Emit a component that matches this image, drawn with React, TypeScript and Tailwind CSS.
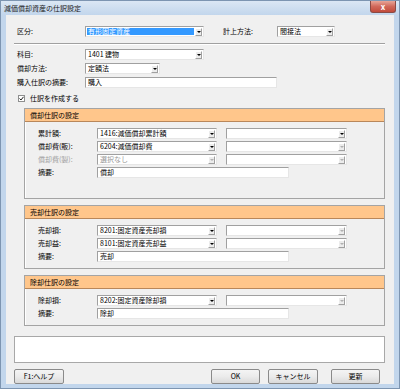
import React from "react";

const FONT = "font-['Noto_Sans_CJK_JP','Noto_Sans_CJK_SC',sans-serif]";

function Arrow({ disabled }: { disabled?: boolean }) {
  return (
    <div className="ml-auto mr-[1px] flex h-[8px] w-[7px] shrink-0 items-center justify-center border border-t-white border-l-white border-r-[#a0a0a0] border-b-[#a0a0a0] bg-[#ececec]">
      <div
        className={
          "h-0 w-0 border-x-[2px] border-t-[2px] border-x-transparent " +
          (disabled ? "border-t-[#b0b0b0]" : "border-t-black")
        }
      />
    </div>
  );
}

function Select({
  w,
  value,
  disabled,
  arrowDisabled,
  highlight,
}: {
  w: string;
  value?: string;
  disabled?: boolean;
  arrowDisabled?: boolean;
  highlight?: boolean;
}) {
  return (
    <div
      className={
        w +
        " flex h-[11px] shrink-0 items-center border border-t-[#a0a0a0] border-l-[#a0a0a0] border-r-[#e6e6e6] border-b-[#e6e6e6] bg-white"
      }
    >
      <div
        className={
          "ml-[1px] flex h-[7px] items-center pl-[1px] leading-none " +
          (highlight ? "flex-1 bg-[#3399ff] text-white mr-[1px]" : "") +
          (disabled ? " text-[#9a9a9a]" : " text-black")
        }
      >
        {value}
      </div>
      <Arrow disabled={arrowDisabled ?? disabled} />
    </div>
  );
}

function Input({ w, value }: { w: string; value: string }) {
  return (
    <div
      className={
        w +
        " flex h-[11px] shrink-0 items-center border border-t-[#a0a0a0] border-l-[#a0a0a0] border-r-[#e6e6e6] border-b-[#e6e6e6] bg-white pl-[2px] leading-none"
      }
    >
      {value}
    </div>
  );
}

function Label({ w, text, disabled }: { w: string; text: string; disabled?: boolean }) {
  return (
    <div className={w + " shrink-0 leading-none " + (disabled ? "text-[#a0a0a0]" : "text-black")}>
      {text}
    </div>
  );
}

type Row = { label: string; first?: string; second?: boolean; firstDisabled?: boolean; secondDisabled?: boolean; input?: string };

function Section({ title, rows, h }: { title: string; rows: Row[]; h: string }) {
  return (
    <div className={h + " ml-[10px] mr-[1px] border border-[#a4a4a4] shadow-[inset_1px_1px_0_#fff]"}>
      <div className="flex h-[13px] items-center border-b border-[#b9875a] bg-[#ffc68b] pl-[5px] leading-none">
        {title}
      </div>
      <div className="flex flex-col gap-[2px] pl-[13px] pt-[6px]">
        {rows.map((r) => (
          <div key={r.label} className="flex h-[11px] items-center">
            <Label w="w-[59px]" text={r.label} disabled={r.firstDisabled} />
            {r.input !== undefined ? (
              <Input w="w-[192px]" value={r.input} />
            ) : (
              <>
                <Select w="w-[120px]" value={r.first} disabled={r.firstDisabled} />
                <div className="ml-[9px]">
                  <Select w="w-[121px]" arrowDisabled={r.secondDisabled} />
                </div>
              </>
            )}
          </div>
        ))}
      </div>
    </div>
  );
}

function Button({ w, text, className = "" }: { w: string; text: string; className?: string }) {
  return (
    <div
      className={
        w +
        " " +
        className +
        " flex h-[15px] items-center justify-center rounded-[2px] border border-[#8a8a8a] bg-gradient-to-b from-[#f4f4f4] via-[#ebebeb] to-[#d9d9d9] leading-none text-black"
      }
    >
      {text}
    </div>
  );
}

export default function App() {
  return (
    <div className={FONT + " flex h-[389px] w-[400px] flex-col border border-[#7d95b1] bg-[#c2d6ec] text-[7px]"}>
      <div className="flex h-[14px] shrink-0 items-start justify-between bg-gradient-to-b from-[#dbe7f4] to-[#c2d6ec]">
        <div className="pl-[3px] pt-[4px] leading-none text-[#1a1a1a]">減価償却資産の仕訳設定</div>
        <div className="mr-[3px] flex h-[12px] w-[26px] items-center justify-center rounded-b-[3px] border border-t-0 border-[#8a4a44] bg-gradient-to-b from-[#e7a598] via-[#d0685a] to-[#c24a3a] text-[8px] font-bold leading-none text-white">
          x
        </div>
      </div>

      <div className="mx-[5px] mb-[4px] flex flex-1 flex-col bg-[#f0f0f0] px-[8px] pt-[11px] text-black">
        <div className="flex h-[11px] items-center pl-[3px]">
          <Label w="w-[68px]" text="区分:" />
          <Select w="w-[119px]" value="有形固定資産" highlight />
          <Label w="ml-[19px] w-[54px]" text="計上方法:" />
          <Select w="w-[58px]" value="間接法" />
        </div>

        <div className="mt-[6px] h-[2px] border-t border-b border-t-[#a0a0a0] border-b-white mr-[1px]" />

        <div className="mt-[4px] flex flex-col gap-[3px] pl-[3px]">
          <div className="flex h-[11px] items-center">
            <Label w="w-[68px]" text="科目:" />
            <Select w="w-[119px]" value="1401 建物" />
          </div>
          <div className="flex h-[11px] items-center">
            <Label w="w-[68px]" text="償却方法:" />
            <Select w="w-[75px]" value="定額法" />
          </div>
          <div className="flex h-[11px] items-center">
            <Label w="w-[68px]" text="購入仕訳の摘要:" />
            <Input w="w-[192px]" value="購入" />
          </div>
        </div>

        <div className="mt-[5px] flex h-[10px] items-center pl-[4px]">
          <div className="flex h-[7px] w-[7px] items-center justify-center border border-[#8e8f8f] bg-white">
            <svg width="5" height="5" viewBox="0 0 5 5">
              <path d="M0.5 2.5 L2 4 L4.5 0.8" fill="none" stroke="#222" strokeWidth="1" />
            </svg>
          </div>
          <div className="ml-[5px] leading-none">仕訳を作成する</div>
        </div>

        <div className="mt-[5px] flex flex-col gap-[6px]">
          <Section
            h="h-[91px]"
            title="償却仕訳の設定"
            rows={[
              { label: "累計額:", first: "1416:減価償却累計額", secondDisabled: false },
              { label: "償却費(販):", first: "6204:減価償却費", secondDisabled: true },
              { label: "償却費(製):", first: "選択なし", firstDisabled: true, secondDisabled: true },
              { label: "摘要:", input: "償却" },
            ]}
          />
          <Section
            h="h-[64px]"
            title="売却仕訳の設定"
            rows={[
              { label: "売却損:", first: "8201:固定資産売却損", secondDisabled: true },
              { label: "売却益:", first: "8101:固定資産売却益", secondDisabled: true },
              { label: "摘要:", input: "売却" },
            ]}
          />
          <Section
            h="h-[51px]"
            title="除却仕訳の設定"
            rows={[
              { label: "除却損:", first: "8202:固定資産除却損", secondDisabled: true },
              { label: "摘要:", input: "除却" },
            ]}
          />
        </div>

        <div className="mr-[1px] mt-[10px] h-[27px] border border-[#a8a8a8] bg-white" />

        <div className="mt-[6px] flex items-center">
          <Button w="w-[50px]" text="F1:ヘルプ" />
          <Button w="w-[49px]" className="ml-auto" text="OK" />
          <Button w="w-[50px]" className="ml-[8px]" text="キャンセル" />
          <Button w="w-[49px]" className="ml-[13px] mr-[6px]" text="更新" />
        </div>
      </div>
    </div>
  );
}
